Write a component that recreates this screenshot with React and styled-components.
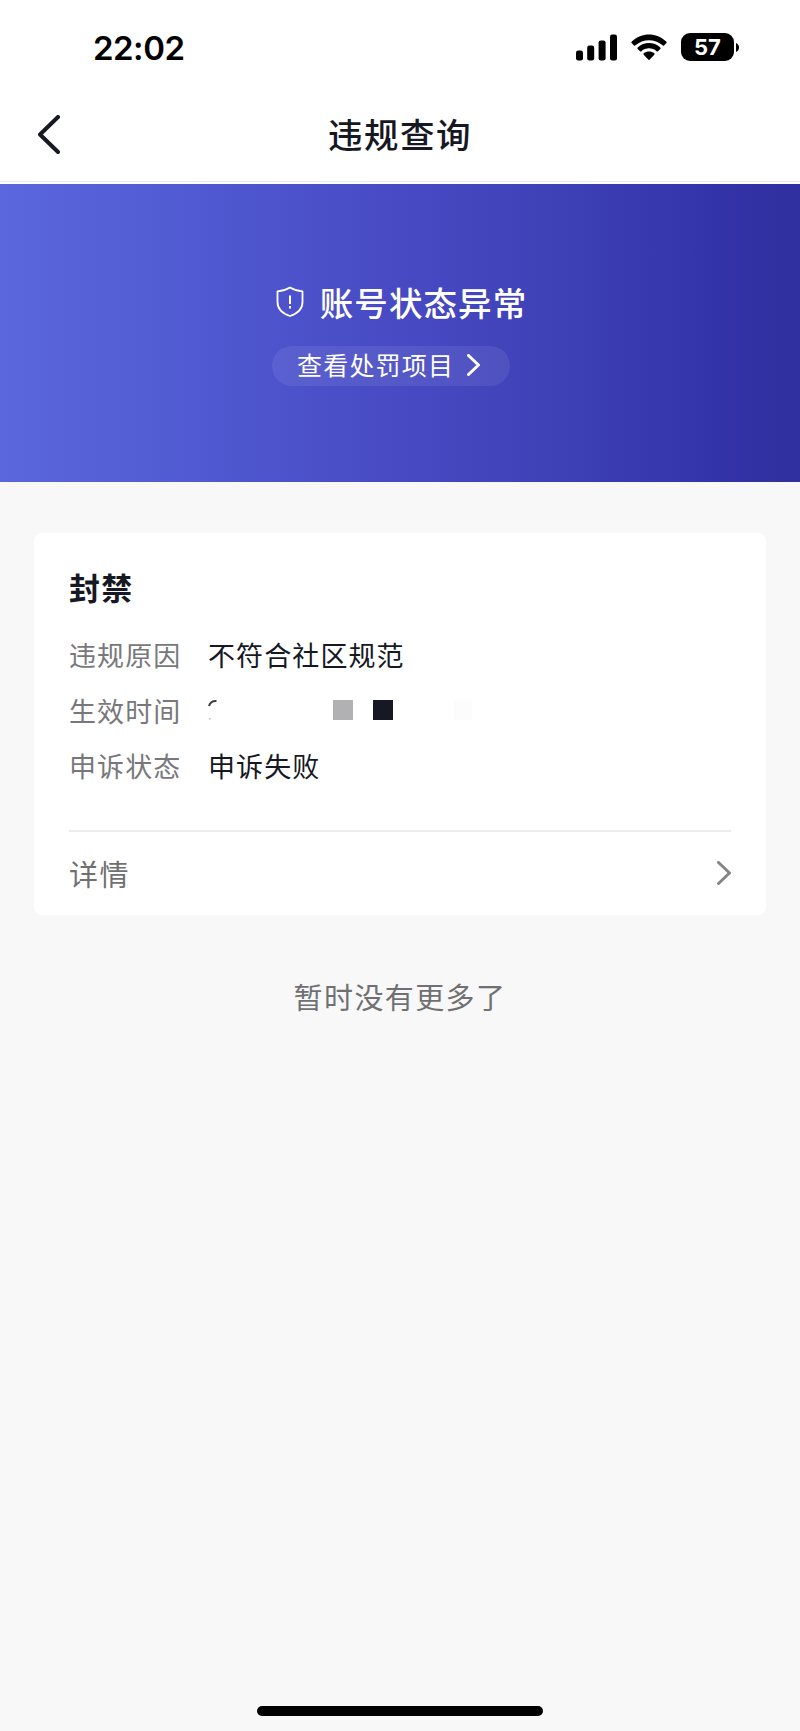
import React from "react";
import styled, { createGlobalStyle } from "styled-components";

const GlobalStyle = createGlobalStyle`
  * { box-sizing: border-box; }
  body {
    margin: 0;
    background: #f8f8f8;
    color: #161823;
    font-family: "Noto Sans CJK SC", sans-serif;
  }
`;

const Screen = styled.div`
  display: flex;
  flex-direction: column;
  width: 800px;
  height: 1731px;
  overflow: hidden;
`;

const StatusBar = styled.div`
  display: flex;
  align-items: center;
  justify-content: space-between;
  height: 94px;
  padding: 0 61px 0 93px;
  background: #fff;
`;

const Clock = styled.span`
  color: #000;
  font: 600 33px/40px Inter, sans-serif;
  letter-spacing: -0.5px;
  padding-top: 2px;
`;

const StatusIcons = styled.div`
  display: flex;
  align-items: center;
  gap: 14px;
`;

const Battery = styled.div`
  display: flex;
  align-items: center;
  gap: 2px;
`;

const BatteryBody = styled.span`
  width: 53px;
  height: 28px;
  border-radius: 9px;
  background: #000;
  color: #fff;
  font: 700 22px/28px Inter, sans-serif;
  text-align: center;
`;

const NavBar = styled.header`
  display: grid;
  grid-template-columns: 100px 1fr 100px;
  align-items: center;
  height: 90px;
  padding-bottom: 9px;
  background: #fff;
  box-shadow: inset 0 -2px #fff, inset 0 -3px #ecece6;
`;

const BackButton = styled.button`
  display: flex;
  align-items: center;
  height: 42px;
  padding: 0 0 0 38px;
  border: 0;
  background: none;
`;

const NavTitle = styled.h1`
  margin: 0;
  padding-bottom: 4px;
  font-size: 34.5px;
  line-height: 48px;
  font-weight: 500;
  letter-spacing: 1.5px;
  text-align: center;
`;

const Hero = styled.section`
  display: flex;
  flex-direction: column;
  align-items: center;
  height: 298px;
  padding-top: 93px;
  color: #fff;
  background: linear-gradient(90deg, #5b67dc 0%, #4f58d0 27%, #484bc4 48%, #3e40b6 70%, #3535ac 86%, #2f2f9f 100%);
`;

const HeroTitle = styled.h2`
  display: flex;
  align-items: center;
  gap: 16px;
  margin: 0 0 0 3px;
  font-size: 33.5px;
  line-height: 50px;
  font-weight: 500;
  letter-spacing: 1.1px;
`;

const PenaltyButton = styled.button`
  display: flex;
  align-items: center;
  justify-content: space-between;
  width: 238px;
  height: 40px;
  margin: 19px 18px 0 0;
  padding: 0 30px 3px 25px;
  border: 0;
  border-radius: 20px;
  background: rgba(255, 255, 255, 0.08);
  color: #fff;
  font: 400 25px/37px "Noto Sans CJK SC", sans-serif;
  letter-spacing: 1.2px;
`;

const Card = styled.section`
  height: 382px;
  margin: 51px 34px 0;
  padding: 31px 35px 0;
  border-radius: 8px;
  background: #fff;
`;

const CardTitle = styled.h3`
  margin: 0 0 17px;
  font-size: 31px;
  line-height: 46px;
  font-weight: 700;
  letter-spacing: 1.2px;
`;

const Row = styled.div`
  display: flex;
  align-items: center;
  height: 55.4px;
  font-size: 27px;
  letter-spacing: 1.1px;
`;

const Label = styled.span`
  width: 139px;
  color: #78787c;
`;

const Value = styled.span`
  color: #161823;
`;

const MaskedValue = styled.span`
  display: flex;
  align-items: center;
  height: 24px;
`;

const MaskBlock = styled.i`
  width: ${(p) => p.$width || 20}px;
  height: 20px;
  margin-left: ${(p) => p.$gap}px;
  background: ${(p) => p.$color};
`;

const DetailLink = styled.a`
  display: flex;
  align-items: center;
  justify-content: space-between;
  height: 83px;
  margin-top: 37px;
  border-top: 2px solid #ececec;
  color: #707073;
  font-size: 29px;
  letter-spacing: 1.4px;
`;

const EmptyHint = styled.p`
  margin: 59px 0 0;
  color: #707073;
  font-size: 29px;
  line-height: 44px;
  letter-spacing: 1.4px;
  text-align: center;
`;

const HomeIndicator = styled.div`
  width: 286px;
  height: 10px;
  margin: auto auto 15px;
  border-radius: 5px;
  background: #000;
`;

const Signal = () => (
  <svg width="41" height="27" viewBox="0 0 41 27">
    <rect x="0" y="16.5" width="7" height="10" rx="2.2" />
    <rect x="11.2" y="11.5" width="7" height="15" rx="2.2" />
    <rect x="22.6" y="6.5" width="7" height="20" rx="2.2" />
    <rect x="34" y="0.5" width="7" height="26" rx="2.2" />
  </svg>
);

const Wifi = () => (
  <svg width="36" height="27" viewBox="0 0 36 27">
    <path d="M0.8 7.6Q0 8.5 0.8 9.3L3 11.4Q3.7 12 4.4 11.3C12 4.4 24 4.4 31.6 11.3Q32.3 12 33 11.4L35.2 9.3Q36 8.5 35.2 7.6C25.5 -1.8 10.5 -1.8 0.8 7.6Z" />
    <path d="M6.7 13.5Q6 14.3 6.7 15L9 17.2Q9.7 17.8 10.4 17.2C14.8 13.4 21.2 13.4 25.6 17.2Q26.3 17.8 27 17.2L29.3 15Q30 14.3 29.3 13.5C23 7.6 13 7.6 6.7 13.5Z" />
    <path d="M12.7 19.3Q12 20.1 12.7 20.8L17.2 25.5Q18 26.3 18.8 25.5L23.3 20.8Q24 20.1 23.3 19.3C20.3 17 15.7 17 12.7 19.3Z" />
  </svg>
);

const Shield = () => (
  <svg width="28" height="32" viewBox="0 0 28 32" fill="none" stroke="#fff" strokeWidth="1.8" strokeLinejoin="round">
    <path d="M14 1.5C10 4 6 5 1.5 5.3V16C1.5 22.5 6.5 27.5 14 30C21.5 27.5 26.5 22.5 26.5 16V5.3C22 5 18 4 14 1.5Z" />
    <path d="M14 9.5V18M14 20V22.5" strokeWidth="2" />
  </svg>
);

const Chevron = ({ size = [13, 24], color, stroke = 3, back }) => {
  const [w, h] = size;
  const e = stroke / 2;
  const points = back
    ? `${w - e},${e} ${e},${h / 2} ${w - e},${h - e}`
    : `${e},${e} ${w - e},${h / 2} ${e},${h - e}`;
  return (
    <svg width={w} height={h} fill="none" stroke={color} strokeWidth={stroke} strokeLinecap="round" strokeLinejoin="round">
      <polyline points={points} />
    </svg>
  );
};

const ClippedDigit = () => (
  <svg width="10" height="24" viewBox="0 0 10 24" fill="none">
    <path d="M1 8C2 4.5 4.5 2.8 8.5 3" stroke="#3c3d43" strokeWidth="2" />
    <path d="M1 21.5L2.5 20" stroke="#c4c4c6" strokeWidth="1.5" />
  </svg>
);

export default function App() {
  return (
    <>
      <GlobalStyle />
      <Screen>
        <StatusBar>
          <Clock>22:02</Clock>
          <StatusIcons>
            <Signal />
            <Wifi />
            <Battery>
              <BatteryBody>57</BatteryBody>
              <svg width="3" height="9" viewBox="0 0 3 9"><path d="M0 0Q3 1.5 3 4.5T0 9Z" /></svg>
            </Battery>
          </StatusIcons>
        </StatusBar>
        <NavBar>
          <BackButton aria-label="返回">
            <Chevron back size={[22, 39]} color="#161823" stroke={4} />
          </BackButton>
          <NavTitle>违规查询</NavTitle>
        </NavBar>
        <Hero>
          <HeroTitle>
            <Shield />
            <span>账号状态异常</span>
          </HeroTitle>
          <PenaltyButton>
            查看处罚项目
            <Chevron size={[13, 22]} color="#fff" stroke={3} />
          </PenaltyButton>
        </Hero>
        <Card>
          <CardTitle>封禁</CardTitle>
          <Row>
            <Label>违规原因</Label>
            <Value>不符合社区规范</Value>
          </Row>
          <Row>
            <Label>生效时间</Label>
            <MaskedValue>
              <ClippedDigit />
              <MaskBlock $gap={115} $color="#b1b1b3" />
              <MaskBlock $gap={20} $color="#161823" />
              <MaskBlock $gap={61} $width={18} $color="#fcfcfc" />
            </MaskedValue>
          </Row>
          <Row>
            <Label>申诉状态</Label>
            <Value>申诉失败</Value>
          </Row>
          <DetailLink>
            详情
            <Chevron size={[14, 24]} color="#858588" stroke={3} />
          </DetailLink>
        </Card>
        <EmptyHint>暂时没有更多了</EmptyHint>
        <HomeIndicator />
      </Screen>
    </>
  );
}
